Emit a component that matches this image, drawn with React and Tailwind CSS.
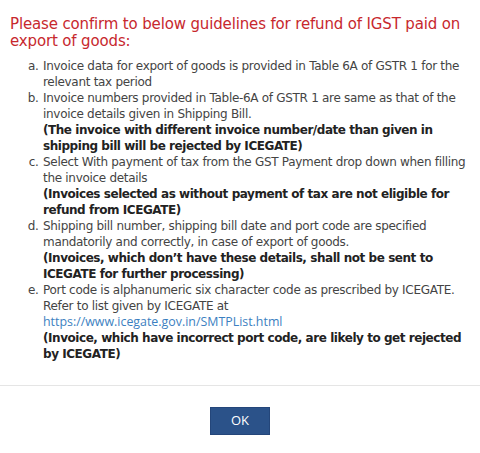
import React from 'react';

// --- Guideline items ---
const items = [
  {
    text: 'Invoice data for export of goods is provided in Table 6A of GSTR 1 for the relevant tax period',
  },
  {
    text: 'Invoice numbers provided in Table-6A of GSTR 1 are same as that of the invoice details given in Shipping Bill.',
    note: '(The invoice with different invoice number/date than given in shipping bill will be rejected by ICEGATE)',
  },
  {
    text: 'Select With payment of tax from the GST Payment drop down when filling the invoice details',
    note: '(Invoices selected as without payment of tax are not eligible for refund from ICEGATE)',
  },
  {
    text: 'Shipping bill number, shipping bill date and port code are specified mandatorily and correctly, in case of export of goods.',
    note: '(Invoices, which don\u2019t have these details, shall not be sent to ICEGATE for further processing)',
  },
  {
    text: 'Port code is alphanumeric six character code as prescribed by ICEGATE. Refer to list given by ICEGATE at',
    link: 'https://www.icegate.gov.in/SMTPList.html',
    note: '(Invoice, which have incorrect port code, are likely to get rejected by ICEGATE)',
  },
];

export default function App() {
  return (
    <div className="w-[480px] h-[453px] bg-white flex flex-col" style={{ fontFamily: 'Verdana, "DejaVu Sans", sans-serif' }}>
      <div className="pl-[10px] pr-[6px] pt-[16px]">
        <h4 className="text-[15px] leading-[17px] tracking-[-0.15px] text-[#c7282e] pr-[4px]">
          Please confirm to below guidelines for refund of IGST paid on export of goods:
        </h4>
        <ol className="list-[lower-alpha] pl-[32px] mt-[8px] text-[12px] leading-[16px] tracking-[-0.3px] text-[#444]">
          {items.map((item, i) => (
            <li key={i} className="pl-[1px]">
              {item.text}
              {item.link && (
                <>
                  <br />
                  <a href="#" className="text-[#3c7fc1] text-[12.4px] tracking-normal font-['Open_Sans',sans-serif]">{item.link}</a>
                </>
              )}
              {item.note && <p className="font-bold tracking-[-0.45px] text-[#222]">{item.note}</p>}
            </li>
          ))}
        </ol>
      </div>
      <div className="mt-auto border-t border-[#e5e5e5] h-[68px] flex items-start justify-center pt-[21px]">
        <button className="w-[60px] h-[28px] bg-[#2b5289] border border-[#24467a] text-white text-[13px] font-['Open_Sans',sans-serif]">
          OK
        </button>
      </div>
    </div>
  );
}
